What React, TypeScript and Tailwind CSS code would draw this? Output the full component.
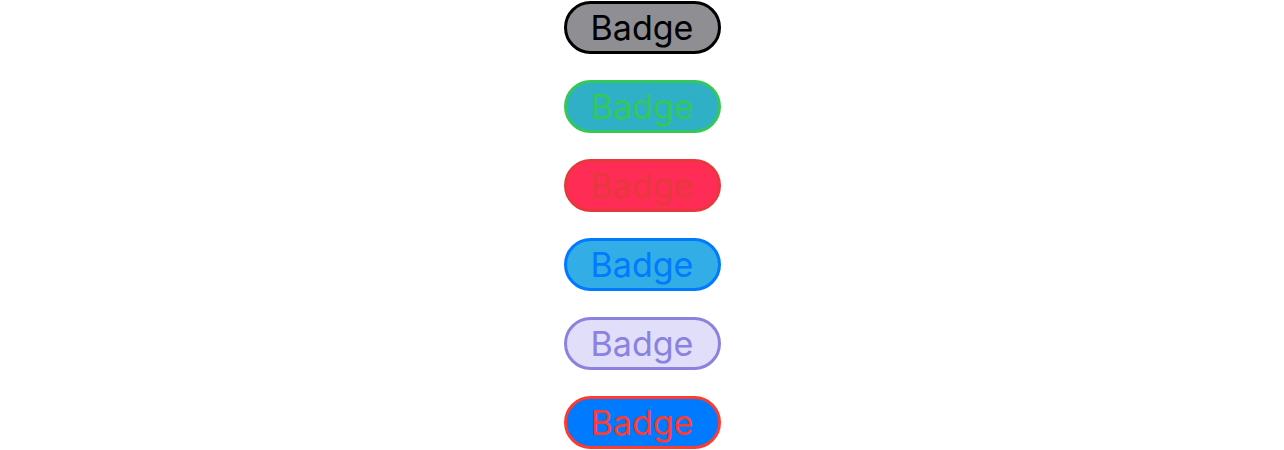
import React from "react";

const badges = [
  "bg-[#8e8e93] border-black text-black",
  "bg-[#30b0c7] border-[#34c759] text-[#34c759]",
  "bg-[#ff2d55] border-[#e8383d] text-[#e8383d]",
  "bg-[#32ade6] border-[#007aff] text-[#007aff]",
  "bg-[#e1defa] border-[#8b82e0] text-[#8b82e0]",
  "bg-[#007aff] border-[#ff3b30] text-[#ff3b30]",
];

export default function App() {
  return (
    <div className="w-[1284px] h-[450px] bg-white flex flex-col items-center pt-[1px] gap-[26px]" style={{ fontFamily: "Inter, 'Liberation Sans', sans-serif" }}>
      {badges.map((c, i) => (
        <div
          key={i}
          className={`w-[157px] h-[53px] rounded-full border-[3px] flex items-center justify-center text-[34px] leading-none pt-[1px] ${c}`}
        >
          Badge
        </div>
      ))}
    </div>
  );
}
